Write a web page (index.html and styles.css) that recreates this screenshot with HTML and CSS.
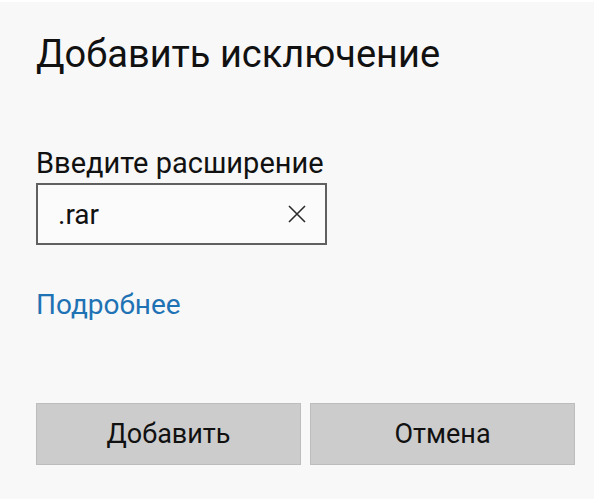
FILE: index.html
```html
<!DOCTYPE html>
<html lang="ru">
<head>
<meta charset="utf-8">
<title>Добавить исключение</title>
<link rel="stylesheet" href="styles.css">
</head>
<body>
<div class="dialog">
  <h1 class="title">Добавить исключение</h1>
  <label class="label" for="ext">Введите расширение</label>
  <div class="field">
    <input id="ext" class="field-input" type="text" value=".rar">
    <span class="clear" aria-label="Очистить">
      <svg width="18" height="18" viewBox="0 0 18 18"><path d="M1 1L17 17M17 1L1 17" stroke="#2b2b2b" stroke-width="1.6" fill="none"/></svg>
    </span>
  </div>
  <a class="link" href="#">Подробнее</a>
  <div class="buttons">
    <button class="btn">Добавить</button>
    <button class="btn">Отмена</button>
  </div>
</div>
</body>
</html>
```
FILE: styles.css
```css
html, body {
  margin: 0;
  padding: 0;
  background: #ffffff;
}
body {
  font-family: Roboto, "Noto Sans", sans-serif;
  color: #111;
}
.dialog {
  box-sizing: border-box;
  width: 594px;
  height: 497px;
  margin-top: 2px;
  background: #f8f8f8;
  padding: 29px 0 0 36px;
  display: flex;
  flex-direction: column;
  align-items: flex-start;
}
.title {
  margin: 0;
  font-size: 38px;
  font-weight: 400;
  line-height: 46px;
  color: #111;
}
.label {
  margin-top: 69px;
  font-size: 29px;
  line-height: 34px;
  color: #111;
}
.field {
  margin-top: 3px;
  box-sizing: border-box;
  width: 291px;
  height: 62px;
  border: 2px solid #606060;
  background: #fbfbfb;
  display: flex;
  align-items: center;
}
.field-input {
  flex: 1;
  min-width: 0;
  border: 0;
  outline: none;
  background: transparent;
  font-family: inherit;
  font-size: 28px;
  color: #111;
  padding: 0 0 0 20px;
  margin: 0;
}
.clear {
  display: flex;
  margin-right: 19px;
}
.link {
  margin-top: 43px;
  font-size: 28px;
  line-height: 34px;
  color: #1f72b4;
  text-decoration: none;
}
.buttons {
  margin-top: 81px;
  display: flex;
  gap: 9px;
}
.btn {
  box-sizing: border-box;
  width: 265px;
  height: 62px;
  background: #cccccc;
  border: 1px solid #bdbdbd;
  font-family: inherit;
  font-size: 27px;
  color: #111;
  padding: 0;
  margin: 0;
}
```
